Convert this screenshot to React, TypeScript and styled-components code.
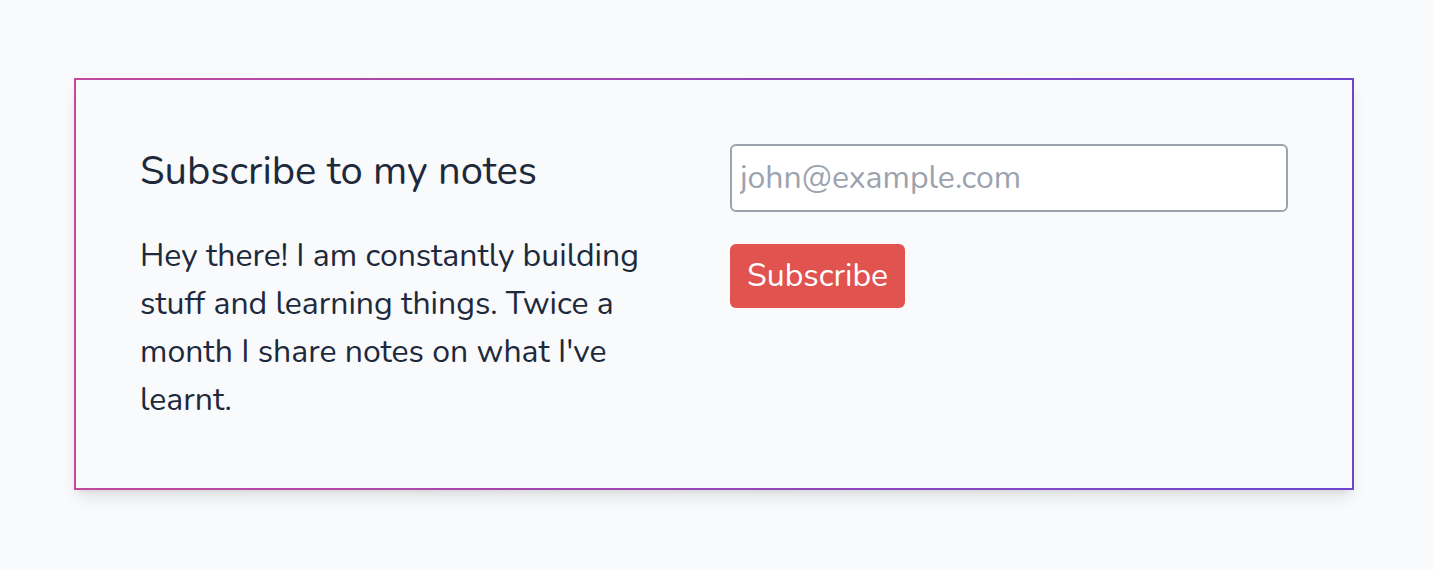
import styled, { createGlobalStyle } from "styled-components";

const GlobalStyle = createGlobalStyle`
  html, body {
    margin: 0;
    padding: 0;
    background: #f8fafc;
  }
  body {
    font-family: "Nunito", Lato, "Noto Sans", sans-serif;
    color: #1e293b;
  }
`;

const Page = styled.div`
  padding: 78px 0 0 74px;
  min-height: 570px;
  box-sizing: border-box;
`;

const Card = styled.section`
  width: 1280px;
  box-sizing: border-box;
  padding: 64px;
  border: 2px solid transparent;
  background:
    linear-gradient(#f8fafc, #f8fafc) padding-box,
    linear-gradient(to right, #c5489c, #6b46d3) border-box;
  box-shadow: 0 10px 15px -3px rgba(0, 0, 0, 0.1),
    0 4px 6px -4px rgba(0, 0, 0, 0.1);
  display: grid;
  grid-template-columns: 1fr 1fr;
  column-gap: 32px;
`;

const Intro = styled.div`
  display: flex;
  flex-direction: column;
`;

const Title = styled.h2`
  margin: 7px 0 0;
  font-size: 40px;
  line-height: 40px;
  font-weight: 400;
`;

const Text = styled.p`
  margin: 41px 0 0;
  font-size: 32px;
  line-height: 48px;
  max-width: 530px;
`;

const Form = styled.form`
  display: flex;
  flex-direction: column;
  align-items: flex-start;
  gap: 32px;
`;

const EmailInput = styled.input`
  width: 100%;
  height: 68px;
  box-sizing: border-box;
  padding: 0 8px 2px;
  border: 2px solid #9ca3af;
  border-radius: 6px;
  background: #fff;
  font-family: inherit;
  font-size: 32px;
  color: #1e293b;
  outline: none;

  &::placeholder {
    color: #9ca3af;
  }
`;

const SubmitButton = styled.button`
  height: 64px;
  padding: 0 17px 2px;
  border: none;
  border-radius: 6px;
  background: #e0534f;
  color: #fff;
  font-family: inherit;
  font-size: 32px;
  cursor: pointer;
`;

export default function App() {
  return (
    <>
      <GlobalStyle />
      <Page>
        <Card>
          <Intro>
            <Title>Subscribe to my notes</Title>
            <Text>
              Hey there! I am constantly building stuff and learning things.
              Twice a month I share notes on what I've learnt.
            </Text>
          </Intro>
          <Form onSubmit={(e) => e.preventDefault()}>
            <EmailInput type="email" placeholder="john@example.com" />
            <SubmitButton type="submit">Subscribe</SubmitButton>
          </Form>
        </Card>
      </Page>
    </>
  );
}
